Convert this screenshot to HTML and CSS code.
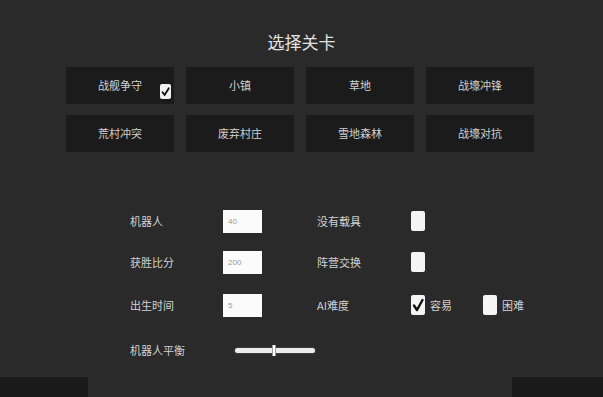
FILE: index.html
```html
<!DOCTYPE html>
<html lang="zh">
<head>
<meta charset="utf-8">
<title>选择关卡</title>
<link rel="stylesheet" href="styles.css">
</head>
<body>
<div class="screen">
  <h1 class="title">选择关卡</h1>
  <div class="maps">
    <div class="tile">战舰争守
      <span class="tile-check"><svg viewBox="0 0 11 15" width="11" height="15"><path d="M2.5 8.2 L4.6 11 L8.8 4.2" fill="none" stroke="#111" stroke-width="1.8" stroke-linecap="round" stroke-linejoin="round"/></svg></span>
    </div>
    <div class="tile">小镇</div>
    <div class="tile">草地</div>
    <div class="tile">战壕冲锋</div>
    <div class="tile">荒村冲突</div>
    <div class="tile">废弃村庄</div>
    <div class="tile">雪地森林</div>
    <div class="tile">战壕对抗</div>
  </div>

  <div class="settings">
    <div class="row">
      <span class="label">机器人</span>
      <input class="field" type="text" value="40">
      <span class="label">没有载具</span>
      <span class="box"></span>
    </div>
    <div class="row row-2">
      <span class="label">获胜比分</span>
      <input class="field" type="text" value="200">
      <span class="label">阵营交换</span>
      <span class="box"></span>
    </div>
    <div class="row row-3">
      <span class="label">出生时间</span>
      <input class="field" type="text" value="5">
      <span class="label">AI难度</span>
      <span class="choices">
        <span class="box"><svg viewBox="0 0 14 20" width="14" height="20"><path d="M3 10.5 L6 15 L11.5 5" fill="none" stroke="#111" stroke-width="2.4" stroke-linecap="round" stroke-linejoin="round"/></svg></span>
        <span class="choice-text">容易</span>
        <span class="box box-gap"></span>
        <span class="choice-text">困难</span>
      </span>
    </div>
    <div class="row row-4">
      <span class="label">机器人平衡</span>
      <span class="slider"><span class="thumb"></span></span>
    </div>
  </div>

  <div class="footer">
    <div class="stub stub-left"></div>
    <div class="stub stub-right"></div>
  </div>
</div>
</body>
</html>
```
FILE: styles.css
```css
html, body {
  margin: 0;
  padding: 0;
  background: #2a2a2a;
}

.screen {
  width: 603px;
  height: 397px;
  display: flex;
  flex-direction: column;
  font-family: "Noto Sans CJK SC", "Noto Sans", sans-serif;
  color: #d4d4d4;
  overflow: hidden;
}

.title {
  margin: 0;
  padding-top: 31px;
  font-size: 17px;
  font-weight: 400;
  line-height: 22px;
  text-align: center;
  color: #e2e2e2;
}

.maps {
  margin-top: 14px;
  padding-left: 66px;
  display: grid;
  grid-template-columns: repeat(4, 108px);
  grid-auto-rows: 37px;
  column-gap: 12px;
  row-gap: 11px;
}

.tile {
  position: relative;
  background: #1b1b1b;
  display: flex;
  align-items: center;
  justify-content: center;
  font-size: 11px;
  line-height: 14px;
  color: #d0d0d0;
  padding-bottom: 2px;
  box-sizing: border-box;
}

.tile-check {
  position: absolute;
  left: 94px;
  top: 17px;
  width: 11px;
  height: 15px;
  background: #f2f2f2;
  border-radius: 2px;
  display: flex;
}

.settings {
  margin-top: 57px;
  padding-left: 130px;
  display: flex;
  flex-direction: column;
}

.row {
  display: grid;
  grid-template-columns: 93px 94px 94px auto;
  align-items: center;
  height: 24px;
}

.row-2 { margin-top: 17px; }
.row-3 { margin-top: 19px; }
.row-4 { margin-top: 22px; height: 22px; }

.label {
  font-size: 11px;
  line-height: 14px;
  color: #d2d2d2;
}

.field {
  width: 39px;
  height: 23px;
  box-sizing: border-box;
  border: none;
  outline: none;
  background: #fbfbfb;
  padding: 0 5px;
  font-family: "Liberation Sans", sans-serif;
  font-size: 8px;
  color: #9a9a9a;
}

.box {
  width: 14px;
  height: 20px;
  background: #f4f4f4;
  border-radius: 2px;
  display: flex;
}

.choices {
  display: flex;
  align-items: center;
}

.choice-text {
  margin-left: 5px;
  font-size: 11px;
  line-height: 14px;
  color: #d2d2d2;
}

.box-gap {
  margin-left: 31px;
}

.slider {
  position: relative;
  margin-left: 12px;
  width: 80px;
  height: 5px;
  border-radius: 3px;
  background: #ececec;
  box-shadow: 0 0 2px rgba(255, 255, 255, 0.3);
}

.thumb {
  position: absolute;
  left: 37px;
  top: -3px;
  width: 4px;
  height: 11px;
  border-radius: 1px;
  background: #ffffff;
  border-left: 1px solid #9a9a9a;
  border-right: 1px solid #9a9a9a;
  box-sizing: border-box;
}

.footer {
  margin-top: auto;
  height: 20px;
  display: flex;
  justify-content: space-between;
}

.stub {
  background: #1a1a1a;
  height: 20px;
}

.stub-left { width: 88px; }
.stub-right { width: 91px; }
```
